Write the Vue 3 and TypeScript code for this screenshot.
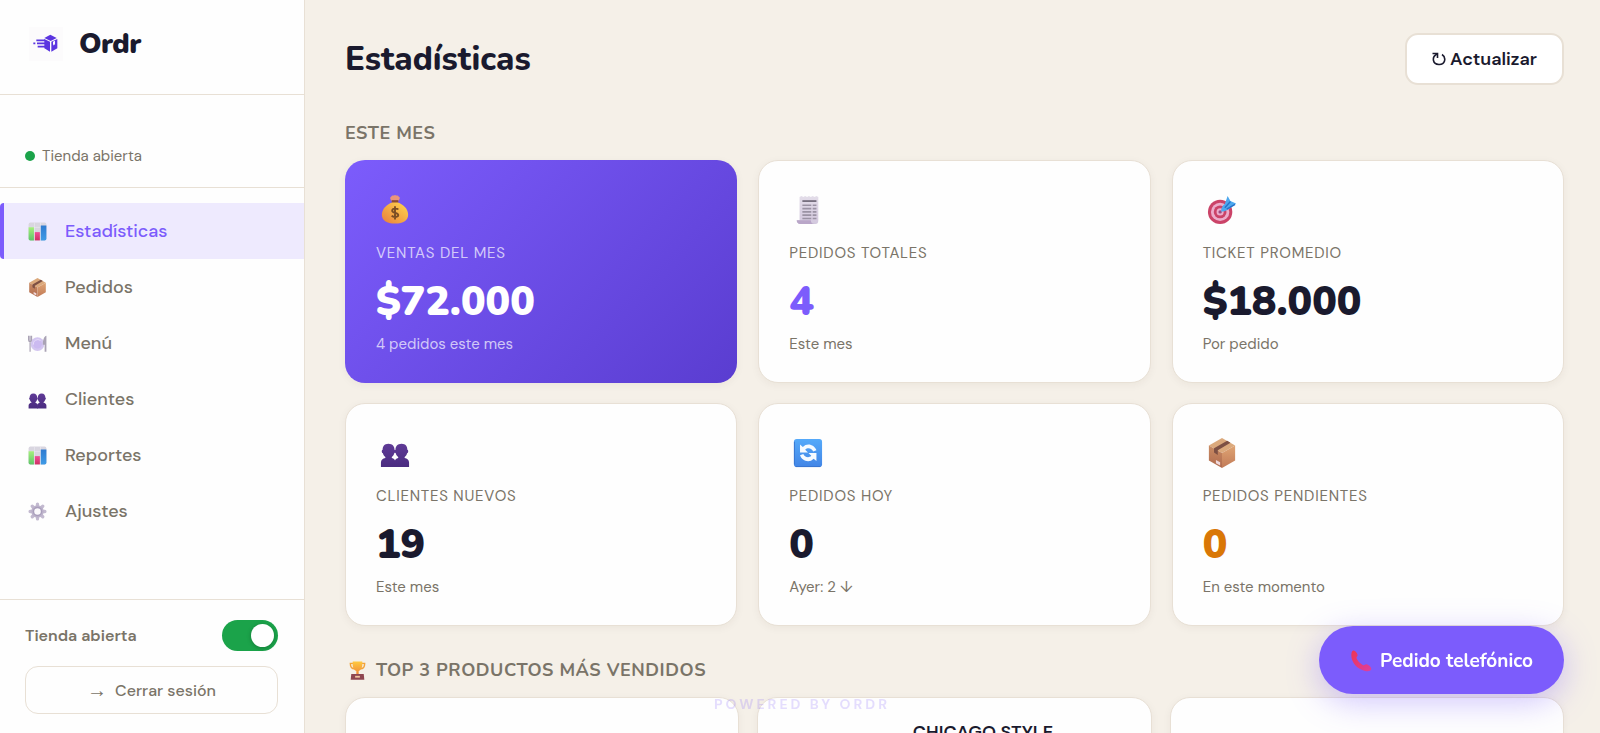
<script setup lang="ts">
import { h, ref } from 'vue'
import type { FunctionalComponent } from 'vue'

type IconName = 'chart' | 'box' | 'plate' | 'people' | 'gear' | 'money' | 'receipt' | 'target' | 'cycle' | 'trophy' | 'phone'

interface NavItem {
  label: string
  icon: IconName
}

interface Stat {
  icon: IconName
  label: string
  value: string
  note: string
  tone?: 'featured' | 'accent' | 'warning'
}

const Emoji: FunctionalComponent<{ name: IconName }> = (props) =>
  h('svg', { class: 'emoji', viewBox: '0 0 32 32', 'aria-hidden': 'true' }, [h('use', { href: '#i-' + props.name })])
Emoji.props = ['name']

const navItems: NavItem[] = [
  { label: 'Estadísticas', icon: 'chart' },
  { label: 'Pedidos', icon: 'box' },
  { label: 'Menú', icon: 'plate' },
  { label: 'Clientes', icon: 'people' },
  { label: 'Reportes', icon: 'chart' },
  { label: 'Ajustes', icon: 'gear' },
]
const active = ref('Estadísticas')
const storeOpen = ref(true)

const stats: Stat[] = [
  { icon: 'money', label: 'Ventas del mes', value: '$72.000', note: '4 pedidos este mes', tone: 'featured' },
  { icon: 'receipt', label: 'Pedidos totales', value: '4', note: 'Este mes', tone: 'accent' },
  { icon: 'target', label: 'Ticket promedio', value: '$18.000', note: 'Por pedido' },
  { icon: 'people', label: 'Clientes nuevos', value: '19', note: 'Este mes' },
  { icon: 'cycle', label: 'Pedidos hoy', value: '0', note: 'Ayer: 2 ↓' },
  { icon: 'box', label: 'Pedidos pendientes', value: '0', note: 'En este momento', tone: 'warning' },
]
const products: string[] = ['', 'CHICAGO STYLE', '']
</script>

<template>
  <svg class="sprite" aria-hidden="true">
    <defs>
      <linearGradient id="g-green" x2="0" y2="1"><stop stop-color="#a5f07c" /><stop offset="1" stop-color="#5fc56a" /></linearGradient>
      <linearGradient id="g-pink" x2="0" y2="1"><stop stop-color="#f0509a" /><stop offset="1" stop-color="#cf2f62" /></linearGradient>
      <linearGradient id="g-blue" x2="0" y2="1"><stop stop-color="#2f7bd0" /><stop offset="1" stop-color="#3f9be6" /></linearGradient>
      <linearGradient id="g-people" x2="0" y2="1"><stop stop-color="#5f3a96" /><stop offset="1" stop-color="#4a2c80" /></linearGradient>
      <linearGradient id="g-bag" x1="1" x2="0" y2="1"><stop stop-color="#ffd84f" /><stop offset="1" stop-color="#ea7d3c" /></linearGradient>
      <linearGradient id="g-cup" x2="0" y2="1"><stop stop-color="#ffc93f" /><stop offset="1" stop-color="#f08a3a" /></linearGradient>
      <linearGradient id="g-tile" x2="0" y2="1"><stop stop-color="#55aafa" /><stop offset="1" stop-color="#4285e6" /></linearGradient>
      <linearGradient id="g-phone" x2="1" y2="1"><stop stop-color="#ef3554" /><stop offset="1" stop-color="#dc3fa0" /></linearGradient>
      <linearGradient id="g-boxl" x2="0" y2="1"><stop stop-color="#c98c64" /><stop offset="1" stop-color="#b06a4e" /></linearGradient>
      <linearGradient id="g-boxr" x2="0" y2="1"><stop stop-color="#dfa473" /><stop offset="1" stop-color="#c27b58" /></linearGradient>
      <linearGradient id="g-paper" x2="0" y2="1"><stop stop-color="#e3dde9" /><stop offset="1" stop-color="#d3c8de" /></linearGradient>
    </defs>
    <symbol id="i-chart" viewBox="0 0 32 32">
      <rect x="1" y="1" width="30" height="30" rx="3" fill="#d9d6e0" />
      <path d="M11 1v30M21 1v30M1 9h30" stroke="#eceaf2" />
      <path d="M1 9h9v22H4a3 3 0 0 1-3-3z" fill="url(#g-green)" />
      <path d="M11.500 17h8.500v14h-8.500z" fill="url(#g-pink)" />
      <path d="M21.500 6H31v22a3 3 0 0 1-3 3h-6.500z" fill="url(#g-blue)" />
    </symbol>
    <symbol id="i-box" viewBox="0 0 32 32">
      <path d="M16 0 30 8 16 16 2 8z" fill="#dba97c" />
      <path d="M2 8 16 16v16L2 24z" fill="url(#g-boxl)" />
      <path d="M30 8 16 16v16l14-8z" fill="url(#g-boxr)" />
      <path d="m7.500 11 14-8 3.500 2-13.500 8v5l-4-2.500z" fill="#7d5044" />
      <path d="m9.500 23.500 4.500 2.300v3.600L9.500 27z" fill="#f0d9dc" />
    </symbol>
    <symbol id="i-plate" viewBox="0 0 32 32">
      <circle cx="16" cy="17" r="11.500" fill="#d3c6f0" />
      <circle cx="16" cy="17" r="7.500" fill="#cbbaf0" />
      <path d="M9 18a7.500 7.500 0 0 1 12-7" fill="none" stroke="#e8def9" stroke-width="1.500" />
      <path d="M1 3v7c0 2 1 3 2.500 3v17M6 3v7c0 2-1 3-2.500 3V3" fill="none" stroke="#aaa3b5" stroke-width="2" />
      <path d="M31 3v27h-3V18h-3c0-8 2-14 6-15z" fill="#aaa3b5" />
    </symbol>
    <symbol id="i-people" viewBox="0 0 32 32">
      <g fill="url(#g-people)">
        <path d="M9 6c4.500 0 6.500 3 6.500 6.500 1 .2.900 3.500-.3 3.800-.5 2-1.400 3.200-2.600 4v1c2.200.6 4 2.400 4 4.700v5H1v-5c0-2.800 2-4.100 4.700-4.700v-1c-1.200-.8-2.100-2-2.600-4-1.500-.3-1.600-3.600-.3-3.800C2.800 9 4.500 6 9 6z" />
        <path d="M23 6c-4.500 0-6.500 3-6.500 6.500-1 .2-.9 3.500.3 3.800.5 2 1.400 3.200 2.600 4v1c-2.200.6-4 2.400-4 4.700v5H31v-5c0-2.800-2-4.100-4.700-4.700v-1c1.200-.8 2.100-2 2.600-4 1.500-.3 1.600-3.600.3-3.800C29.200 9 27.500 6 23 6z" />
      </g>
    </symbol>
    <symbol id="i-gear" viewBox="0 0 32 32">
      <path d="M16 3.500v25M3.500 16h25M7.200 7.200l17.600 17.600M24.800 7.200 7.200 24.800" stroke="#c3bad0" stroke-width="5.500" stroke-linecap="round" />
      <circle cx="16" cy="16" r="10.500" fill="#bdb3cb" />
      <circle cx="16" cy="16" r="8" fill="#a99ebb" />
      <circle cx="16" cy="16" r="5.500" fill="#fbf9fc" />
    </symbol>
    <symbol id="i-money" viewBox="0 0 32 32">
      <path d="M12 2c0-2 2.500-1 4-2 1.500 1 4 0 4 2 2 0 1 3-1 4.500h-6C11 5 10 2 12 2z" fill="#e9957c" />
      <path d="M12.500 5.500h7V9h-7z" fill="#8b4b35" />
      <path d="M13 8h6c6 2 11 7 11 13s-5 9.500-14 9.500S2 27 2 21 7 10 13 8z" fill="url(#g-bag)" />
      <path d="M19.500 15.500c-1-1.300-6.500-1.600-6.500 1.200 0 3 6.500 1.600 6.500 4.700 0 2.600-5.500 2.600-7 .6M16 12v14" fill="none" stroke="#7a4d24" stroke-width="2" />
    </symbol>
    <symbol id="i-receipt" viewBox="0 0 32 32">
      <path d="m7 2 2-1 2 1 2-1 2 1 2-1 2 1 2-1 2 1 2-1 2 1v25c0 3-1 4-3 4H8c-3 0-4-2-4-4h3z" fill="url(#g-paper)" />
      <path d="M4 27h15c0 3 2 4 4 4H8c-3 0-4-2-4-4z" fill="#b9a6c8" />
      <path d="M10 6.500h15" stroke="#77707f" stroke-width="2" />
      <path d="M10 11h9.500m1.500 0h4M10 14.500h9.500m1.500 0h4M10 18h9.500m1.500 0h4M10 21.500h9.500m1.500 0h4M10 25h9.500m1.500 0h4" stroke="#9b93a4" stroke-width="1.700" />
    </symbol>
    <symbol id="i-target" viewBox="0 0 32 32">
      <circle cx="14" cy="18" r="13" fill="#cb4368" />
      <circle cx="14" cy="18" r="9.800" fill="#ecaccb" />
      <circle cx="14" cy="18" r="6.800" fill="#cb4368" />
      <circle cx="14" cy="18" r="3.800" fill="#ecaccb" />
      <circle cx="14" cy="18" r="1.800" fill="#9a4c83" />
      <path d="M15 17.500c0-3 1-6 4-8L22 1l3 5.500L31 9l-5 4c-4 3-7 5-11 4.500z" fill="#4da8ee" />
      <path d="M19 13.500 25 7M21 15l9-5" stroke="#2672c8" stroke-width="1.500" />
    </symbol>
    <symbol id="i-cycle" viewBox="0 0 32 32">
      <rect x="1" y="1" width="30" height="30" rx="3" fill="url(#g-tile)" />
      <path d="M1.500 28V4M3 30.500h26" stroke="#3674cf" />
      <path d="M7.500 7v8.500H16l-3-3c3-3 7.500-1 8.500 2l3.500-1.500C23 7 15 4.500 10.500 9.500zM25 24.500V16h-8.500l3 3c-3 3-7.500 1-8.500-2l-3.500 1.500C9.500 24.500 17.500 27 22 22z" fill="#f7fbff" />
    </symbol>
    <symbol id="i-trophy" viewBox="0 0 32 32">
      <path d="M9 4H4c0 6 3 9 7 9M23 4h5c0 6-3 9-7 9" fill="none" stroke="#f2a33a" stroke-width="2.500" />
      <path d="M8 1h16c1 9-1 14-6 16v5h-4v-5C9 15 7 10 8 1z" fill="url(#g-cup)" />
      <path d="M5.500 22h21l1 9.500h-23z" fill="#8f4650" />
      <path d="M12 25h8v3h-8z" fill="#f3c4a0" />
    </symbol>
    <symbol id="i-phone" viewBox="0 0 32 32">
      <path d="M4 1c3-1.500 6 2.500 7 6 .6 2.500-2 3-1.500 5C11 16 15 20 19 22c2 .8 3-1.700 5-1.200 3.500.7 7.500 4.700 7 7.200-.7 2.500-4.500 3.500-9 2.500C10 28 1 17 2 6c.2-2.500.8-4.300 2-5z" fill="url(#g-phone)" />
    </symbol>
  </svg>

  <div class="app">
    <aside class="sidebar">
      <div class="brand">
        <svg class="logo" viewBox="0 0 102 102" aria-hidden="true">
          <rect width="102" height="102" fill="#fcfbfc" />
          <g fill="#5b35e0">
            <path d="m46 33 18-10 19 10-18 9z" />
            <path d="m46 36 17 8v30l-17-10z" />
            <path d="m67 44 18-8v28l-18 10z" />
          </g>
          <path d="m72 44 6-3v13l-3-2-3 4z" fill="#fcfbfc" />
          <path d="M22 40h26M13 49h6M24 49h24M26 59h22" fill="none" stroke="#5b35e0" stroke-width="5" />
        </svg>
        <span class="brand-name">Ordr</span>
      </div>
      <div class="status"><span class="dot"></span>Tienda abierta</div>
      <nav class="nav" aria-label="Principal">
        <a
          v-for="item in navItems"
          :key="item.label"
          href="#"
          class="nav-item"
          :class="{ active: item.label === active }"
          @click.prevent="active = item.label"
        >
          <Emoji :name="item.icon" />
          <span>{{ item.label }}</span>
        </a>
      </nav>
      <div class="footer">
        <label class="toggle-row" for="store-open">
          <span>Tienda abierta</span>
          <input id="store-open" v-model="storeOpen" type="checkbox" role="switch" class="switch" />
        </label>
        <button type="button" class="logout"><span class="arrow">→</span><span>Cerrar sesión</span></button>
      </div>
    </aside>

    <main class="main">
      <header class="header">
        <h1>Estadísticas</h1>
        <button type="button" class="refresh">
          <svg viewBox="0 0 14 14" aria-hidden="true">
            <path d="M5 2C2 3.500 1 6 1.500 8.500c1 5 9.500 5.500 11 .5.700-2.500-.2-5-2.500-6.500" />
            <path d="M.5 1.500h5V6" />
          </svg>
          Actualizar
        </button>
      </header>

      <h2>Este mes</h2>
      <section class="stats" aria-label="Este mes">
        <article v-for="s in stats" :key="s.label" class="card stat" :class="s.tone">
          <div class="stat-icon"><Emoji :name="s.icon" /></div>
          <div class="stat-label">{{ s.label }}</div>
          <div class="stat-value">{{ s.value }}</div>
          <div class="stat-note">{{ s.note }}</div>
        </article>
      </section>

      <h2 class="top-title"><Emoji name="trophy" />Top 3 productos más vendidos</h2>
      <section class="products" aria-label="Productos más vendidos">
        <article v-for="(p, i) in products" :key="i" class="card product">{{ p }}</article>
      </section>
    </main>

    <div class="powered">Powered by Ordr</div>
    <button type="button" class="call"><Emoji name="phone" />Pedido telefónico</button>
  </div>
</template>

<style>
body {
  margin: 0;
  overflow: hidden;
}
</style>

<style scoped>
.sprite {
  position: absolute;
  width: 0;
  height: 0;
}
.app {
  --ink: #1a1a2e;
  --muted: #7a7468;
  --line: #e8e0d5;
  --violet: #7c5cfc;
  --body: "DM Sans", Inter, "Liberation Sans", sans-serif;
  --display: Nunito, "Open Sans", "Noto Sans", sans-serif;
  display: flex;
  height: 100vh;
  background: #f5f0e8;
  color: var(--ink);
  font-family: var(--body);
}
button {
  font-family: inherit;
  cursor: pointer;
}
.emoji {
  display: block;
  flex: none;
}
.sidebar {
  box-sizing: border-box;
  flex: none;
  display: flex;
  flex-direction: column;
  width: 305px;
  background: #fefefe;
  border-right: 1px solid var(--line);
}
.brand {
  display: flex;
  align-items: center;
  gap: 16px;
  padding: 24px 29px 30px;
  border-bottom: 1px solid var(--line);
}
.logo {
  width: 34px;
  height: 34px;
}
.brand-name {
  font: 900 28px/40px var(--display);
  letter-spacing: -0.02em;
}
.status {
  display: flex;
  align-items: center;
  gap: 7px;
  padding: 50px 25px 20px;
  border-bottom: 1px solid var(--line);
  color: var(--muted);
  font-size: 15px;
  line-height: 22px;
}
.dot {
  width: 10px;
  height: 10px;
  border-radius: 50%;
  background: #1ba34a;
}
.nav {
  flex: 1;
  padding-top: 15px;
}
.nav-item {
  display: flex;
  align-items: center;
  gap: 18px;
  height: 56px;
  padding: 0 24px;
  border-left: 4px solid transparent;
  color: var(--muted);
  font-size: 18px;
  font-weight: 500;
  text-decoration: none;
}
.nav-item .emoji {
  width: 19px;
  height: 19px;
}
.nav-item.active {
  border-left-color: var(--violet);
  border-radius: 4px 0 0 4px;
  background: #eeeafe;
  color: var(--violet);
}
.footer {
  padding: 20px 26px 19px 25px;
  border-top: 1px solid var(--line);
}
.toggle-row {
  display: flex;
  align-items: center;
  justify-content: space-between;
  color: var(--muted);
  font-size: 16px;
  font-weight: 600;
}
.switch {
  appearance: none;
  display: flex;
  align-items: center;
  width: 56px;
  height: 31px;
  margin: 0;
  padding: 0 4px;
  box-sizing: border-box;
  border-radius: 16px;
  background: #c9c3b8;
}
.switch::before {
  content: "";
  width: 23px;
  height: 23px;
  border-radius: 50%;
  background: #fff;
  box-shadow: 0 1px 4px rgba(0, 0, 0, 0.25);
}
.switch:checked {
  justify-content: flex-end;
  background: #1ba34a;
}
.logout {
  display: flex;
  align-items: center;
  justify-content: center;
  gap: 8px;
  width: 100%;
  height: 48px;
  margin-top: 15px;
  border: 1px solid var(--line);
  border-radius: 13px;
  background: transparent;
  color: var(--muted);
  font-size: 16px;
  font-weight: 500;
}
.arrow {
  font-family: "Liberation Sans", sans-serif;
  font-size: 20px;
  line-height: 20px;
  font-weight: 400;
}
.main {
  flex: 1;
  min-width: 0;
  padding: 33px 36px 0 40px;
  overflow: auto;
  scrollbar-width: none;
}
.header {
  display: flex;
  align-items: flex-end;
  justify-content: space-between;
}
h1 {
  margin: 0;
  font: 800 33px/50px var(--display);
}
.refresh {
  display: flex;
  align-items: center;
  gap: 4px;
  height: 52px;
  padding: 0 25px;
  border: 2px solid var(--line);
  border-radius: 13px;
  background: #fff;
  color: var(--ink);
  font-size: 18px;
  font-weight: 600;
}
.refresh svg {
  width: 14px;
  height: 14px;
  fill: none;
  stroke: currentColor;
  stroke-width: 1.6;
}
h2 {
  display: flex;
  align-items: center;
  margin: 36px 0 15px;
  color: var(--muted);
  font: 700 18px/24px var(--display);
  letter-spacing: 0.03em;
  text-transform: uppercase;
}
.card {
  box-sizing: border-box;
  min-width: 0;
  border: 1px solid var(--line);
  border-radius: 20px;
  background: #fefefe;
  box-shadow: 0 2px 8px rgba(60, 40, 20, 0.05);
}
.stats {
  display: grid;
  grid-template-columns: repeat(3, 1fr);
  gap: 20px 21px;
}
.stat {
  padding: 30px 30px 28px;
}
.stat-icon {
  padding: 4px;
}
.stat-icon .emoji {
  width: 30px;
  height: 30px;
}
.stat-label {
  margin-top: 14px;
  color: var(--muted);
  font-size: 15px;
  line-height: 20px;
  letter-spacing: 0.05em;
  text-transform: uppercase;
}
.stat-value {
  margin: 17px 0 10px;
  font: 900 41px/44px var(--display);
}
.stat-note {
  color: var(--muted);
  font-size: 15px;
  line-height: 20px;
}
.featured {
  border-color: transparent;
  background: linear-gradient(135deg, #7c5cfc, #5a3dd0) border-box;
  color: #fff;
}
.featured .stat-label,
.featured .stat-note {
  color: rgba(255, 255, 255, 0.7);
}
.accent .stat-value {
  color: var(--violet);
}
.warning .stat-value {
  color: #d97706;
}
.top-title {
  margin: 32px 0 15px;
  gap: 9px;
}
.top-title .emoji {
  width: 19px;
  height: 19px;
  margin-left: 3px;
}
.products {
  display: grid;
  grid-template-columns: repeat(3, 1fr);
  gap: 18px;
}
.product {
  height: 140px;
  padding: 22px 0 0 57px;
  font-size: 18px;
  font-weight: 600;
  line-height: 24px;
  text-align: center;
}
.powered {
  position: fixed;
  right: 0;
  bottom: 19px;
  left: 0;
  padding-left: 4px;
  color: rgba(124, 92, 252, 0.2);
  font: 700 14px/20px var(--body);
  letter-spacing: 3px;
  text-align: center;
  text-transform: uppercase;
  pointer-events: none;
}
.call {
  position: fixed;
  right: 36px;
  bottom: 39px;
  display: flex;
  align-items: center;
  gap: 8px;
  height: 68px;
  padding: 1px 31px 0;
  border: 0;
  border-radius: 34px;
  background: var(--violet);
  box-shadow: 0 8px 32px rgba(124, 92, 252, 0.35);
  color: #fff;
  font: 700 19px/24px var(--display);
}
.call .emoji {
  width: 22px;
  height: 22px;
}
</style>
